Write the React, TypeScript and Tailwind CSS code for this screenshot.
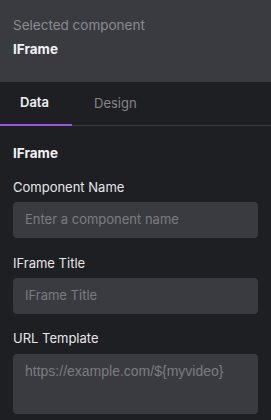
import React from "react";

export default function App() {
  return (
    <div className="w-[271px] h-[420px] overflow-hidden bg-[#1e1f22] flex flex-col" style={{ fontFamily: "Inter, 'Noto Sans', sans-serif" }}>
      <div className="h-[82px] bg-[#3a3b40] px-[13px] pt-[15px] flex flex-col gap-[4px]">
        <div className="text-[13.5px] leading-[20px] text-[#8b8c91]">Selected component</div>
        <div className="text-[13.5px] leading-[20px] font-bold text-[#f2f2f3]">IFrame</div>
      </div>
      <div className="h-[44px] flex border-b border-[#3a3b3f]">
        <div className="w-[72px] pl-[20px] flex items-center text-[13px] font-semibold text-[#f0f0f2] border-b-2 border-[#9a55e0] -mb-px">Data</div>
        <div className="ml-[22px] flex items-center text-[13px] text-[#85868b]">Design</div>
      </div>
      <div className="px-[13px] pt-[17px] flex flex-col">
        <div className="text-[13.5px] leading-[20px] font-bold text-[#f2f2f3]">IFrame</div>
        <div className="mt-[14px] text-[13px] leading-[20px] text-[#e6e6e8]">Component Name</div>
        <div className="mt-[5px] h-[36px] rounded-[4px] bg-[#3a3b40] px-[12px] flex items-center text-[13px] text-[#7a7b80]">Enter a component name</div>
        <div className="mt-[15px] text-[13px] leading-[20px] text-[#e6e6e8]">IFrame Title</div>
        <div className="mt-[5px] h-[36px] rounded-[4px] bg-[#3a3b40] px-[12px] flex items-center text-[13px] text-[#7a7b80]">IFrame Title</div>
        <div className="mt-[14px] text-[13px] leading-[20px] text-[#e6e6e8]">URL Template</div>
        <div className="mt-[6px] h-[60px] rounded-[4px] bg-[#3a3b40] px-[12px] pt-[7px] text-[14px] leading-[20px] text-[#7a7b80]" style={{ fontFamily: "'Liberation Sans', Arial, sans-serif" }}>https://example.com/${"{myvideo}"}</div>
      </div>
    </div>
  );
}
